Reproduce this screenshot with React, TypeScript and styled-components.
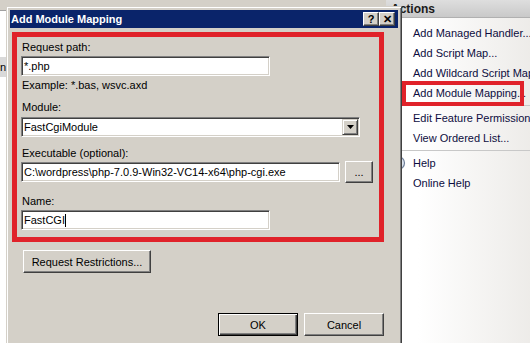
import React from 'react';
import styled, { createGlobalStyle } from 'styled-components';

const GlobalStyle = createGlobalStyle`
  html, body { margin: 0; padding: 0; }
  body {
    width: 530px; height: 343px; overflow: hidden; background: #fff;
    font-family: "Liberation Sans", Arial, sans-serif; font-size: 11px; color: #000;
  }
`;

const Desktop = styled.div`
  position: relative; width: 530px; height: 343px; overflow: hidden;
  display: flex; background: #fff;
`;

/* ---------- background application (IIS manager) ---------- */
const MainPane = styled.div`
  flex: 0 0 386px; display: flex; flex-direction: column; background: #fff;
`;
const PaneToolbar = styled.div`
  height: 10px; background: #d4d0c8; border-bottom: 1px solid #a0a0a0;
`;
const TreeList = styled.div`
  width: 6px; overflow: hidden; display: flex; flex-direction: column; padding-top: 46px;
`;
const TreeRow = styled.div<{ $selected?: boolean }>`
  height: 20px; display: flex; align-items: center; justify-content: flex-end;
  white-space: nowrap; background: ${p => (p.$selected ? '#d9d9d9' : 'transparent')};
`;

const ActionsPanel = styled.div`
  flex: 1; display: flex; flex-direction: column;
  background: linear-gradient(to right, #fff 20%, #ebe9e6 100%);
`;
const ActionsHeader = styled.div`
  height: 17px; display: flex; align-items: center; padding-left: 5px;
  background: linear-gradient(#dedede, #c9c9c9);
  font-weight: bold; font-size: 12px; color: #1a1a1a;
  border-bottom: 1px solid #b0b0b0;
`;
const ActionList = styled.div`
  display: flex; flex-direction: column; padding-top: 5px;
`;
const ActionItem = styled.div<{ $highlight?: boolean }>`
  position: relative; height: 20px; display: flex; align-items: center;
  padding-left: 4px; white-space: nowrap; color: #0d0d40;
  ${p => p.$highlight && `
    &::after {
      content: ''; position: absolute; left: 16px; top: -2px; width: 122px; height: 25px;
      box-sizing: border-box; border: 4px solid #e0222a;
    }
  `}
`;
const IconSlot = styled.span`
  width: 16px; height: 16px; margin-right: 7px; flex: none; display: inline-flex;
`;
const Separator = styled.div`
  height: 1px; background: #c8c8c8; margin: 2px 0 2px 16px;
`;

/* ---------- dialog ---------- */
const Dialog = styled.div`
  position: absolute; left: 6px; top: 6px; width: 396px; height: 350px; box-sizing: border-box;
  background: #d4d0c8;
  border: 1px solid; border-color: #d4d0c8 #404040 #404040 #d4d0c8;
  box-shadow: inset 1px 1px 0 #fff, inset -1px -1px 0 #808080;
  padding: 3px; display: flex; flex-direction: column;
`;
const TitleBar = styled.div`
  height: 18px; background: #0a246a; display: flex; align-items: center;
  padding: 0 3px 0 1px;
`;
const TitleText = styled.div`
  flex: 1; color: #fff; font-weight: bold; font-size: 11px;
`;
const TitleButton = styled.div`
  width: 16px; height: 14px; box-sizing: border-box; background: #d4d0c8;
  border: 1px solid; border-color: #fff #404040 #404040 #fff;
  box-shadow: inset -1px -1px 0 #808080;
  display: flex; align-items: center; justify-content: center;
  font-weight: bold; font-size: 11px; line-height: 1; color: #000;
`;
const DialogBody = styled.div`
  flex: 1; display: flex; flex-direction: column; padding: 4px 14px 0 2px;
`;
const RedFrame = styled.div`
  border: 5px solid #e0222a; padding: 3px 0 7px 4px;
  display: flex; flex-direction: column; align-items: flex-start;
`;
const Label = styled.div<{ $gap?: number }>`
  height: 14px; line-height: 14px; padding-left: 1px; margin-top: ${p => p.$gap ?? 0}px;
  white-space: nowrap;
`;
const TextBox = styled.div<{ $w: number; $gap?: number }>`
  width: ${p => p.$w}px; height: 20px; box-sizing: border-box; background: #fff;
  margin-top: ${p => p.$gap ?? 2}px;
  border: 1px solid; border-color: #808080 #fff #fff #808080;
  box-shadow: inset 1px 1px 0 #404040, inset -1px -1px 0 #d4d0c8;
  display: flex; align-items: center; padding: 0 2px; white-space: nowrap; overflow: hidden;
`;
const Caret = styled.span`
  display: inline-block; width: 1px; height: 13px; background: #000; margin-left: 0px;
`;
const SelectBox = styled(TextBox)`
  padding: 0 2px 0 2px; justify-content: space-between;
`;
const DropButton = styled.div`
  width: 16px; height: 16px; box-sizing: border-box; background: #d4d0c8;
  border: 1px solid; border-color: #d4d0c8 #404040 #404040 #d4d0c8;
  box-shadow: inset 1px 1px 0 #fff, inset -1px -1px 0 #808080;
  display: flex; align-items: center; justify-content: center; margin-right: -1px;
`;
const Row = styled.div`
  display: flex; align-items: center; gap: 5px; margin-top: 1px;
`;
const Button = styled.div<{ $w: number; $h?: number; $default?: boolean }>`
  width: ${p => p.$w}px; height: ${p => p.$h ?? 23}px; box-sizing: border-box;
  background: #d4d0c8; display: flex; align-items: center; justify-content: center;
  white-space: nowrap; color: #000;
  ${p => p.$default
    ? `border: 1px solid #000; box-shadow: inset 1px 1px 0 #fff, inset -1px -1px 0 #404040, inset -2px -2px 0 #808080;`
    : `border: 1px solid; border-color: #fff #404040 #404040 #fff; box-shadow: inset -1px -1px 0 #808080;`}
`;
const RestrictRow = styled.div`
  margin: 8px 0 0 11px;
`;
const Footer = styled.div`
  display: flex; justify-content: flex-end; gap: 6px; margin-top: 40px; padding-right: 0;
`;

const HelpIcon = () => (
  <svg width="16" height="16" viewBox="0 0 16 16">
    <circle cx="8" cy="8" r="6.5" fill="#dfe6f0" stroke="#6f7f9a" strokeWidth="1.2" />
    <text x="8" y="11.5" textAnchor="middle" fontSize="10" fontWeight="bold" fill="#2a4f9a" fontFamily="Liberation Sans, sans-serif">?</text>
  </svg>
);

export default function App() {
  return (
    <>
      <GlobalStyle />
      <Desktop>
        <MainPane>
          <PaneToolbar />
          <TreeList>
            <TreeRow $selected>Configuration</TreeRow>
          </TreeList>
        </MainPane>
        <ActionsPanel>
          <ActionsHeader>Actions</ActionsHeader>
          <ActionList>
            <ActionItem><IconSlot />Add Managed Handler...</ActionItem>
            <ActionItem><IconSlot />Add Script Map...</ActionItem>
            <ActionItem><IconSlot />Add Wildcard Script Map...</ActionItem>
            <ActionItem $highlight><IconSlot />Add Module Mapping...</ActionItem>
            <Separator />
            <ActionItem><IconSlot />Edit Feature Permissions...</ActionItem>
            <ActionItem><IconSlot />View Ordered List...</ActionItem>
            <Separator />
            <ActionItem><IconSlot><HelpIcon /></IconSlot>Help</ActionItem>
            <ActionItem><IconSlot />Online Help</ActionItem>
          </ActionList>
        </ActionsPanel>

        <Dialog>
          <TitleBar>
            <TitleText>Add Module Mapping</TitleText>
            <TitleButton>?</TitleButton>
            <TitleButton>✕</TitleButton>
          </TitleBar>
          <DialogBody>
            <RedFrame>
              <Label>Request path:</Label>
              <TextBox $w={249}>*.php</TextBox>
              <Label $gap={2}>Example: *.bas, wsvc.axd</Label>
              <Label $gap={8}>Module:</Label>
              <SelectBox $w={339} $gap={3}>
                <span>FastCgiModule</span>
                <DropButton>
                  <svg width="7" height="4" viewBox="0 0 7 4"><path d="M0 0h7L3.5 4z" fill="#000" /></svg>
                </DropButton>
              </SelectBox>
              <Label $gap={9}>Executable (optional):</Label>
              <Row>
                <TextBox $w={319} $gap={0}>C:\wordpress\php-7.0.9-Win32-VC14-x64\php-cgi.exe</TextBox>
                <Button $w={28} $h={22}>...</Button>
              </Row>
              <Label $gap={11}>Name:</Label>
              <TextBox $w={249}>FastCGI<Caret /></TextBox>
            </RedFrame>
            <RestrictRow>
              <Button $w={128}>Request Restrictions...</Button>
            </RestrictRow>
            <Footer>
              <Button $w={80} $default>OK</Button>
              <Button $w={80}>Cancel</Button>
            </Footer>
          </DialogBody>
        </Dialog>
      </Desktop>
    </>
  );
}
